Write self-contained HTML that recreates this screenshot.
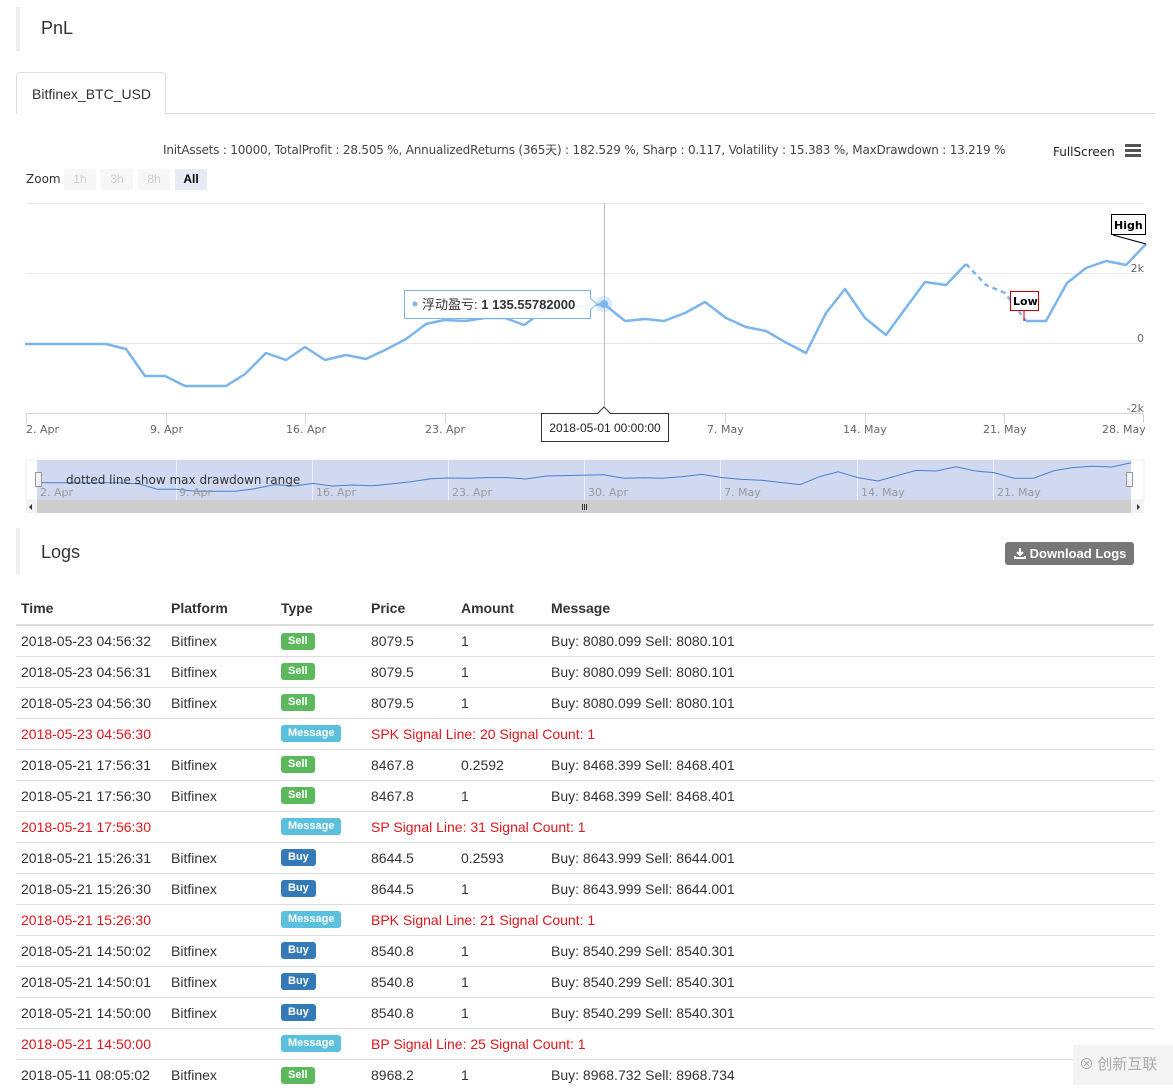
<!DOCTYPE html>
<html><head><meta charset="utf-8">
<style>
*{box-sizing:border-box;margin:0;padding:0}
body{width:1173px;height:1085px;overflow:hidden;background:#fff;font-family:"Liberation Sans","Noto Sans CJK SC",sans-serif;color:#333;position:relative;font-size:14px}
.abs{position:absolute}
.hdr{position:absolute;left:16px;border-left:4px solid #eee;}
table{position:absolute;left:16px;top:595px;width:1138px;border-collapse:collapse;font-size:14px}
th{text-align:left;font-weight:bold;height:30px;border-bottom:2px solid #ddd;padding-left:5px;vertical-align:bottom;padding-bottom:8px}
td{height:31px;border-top:1px solid #ddd;padding-left:5px}
tr.m td{color:#e0161c}
.b{display:inline-block;color:#fff;font-size:11px;font-weight:bold;padding:2px 7px;border-radius:3px;line-height:13px;vertical-align:middle}
.s{background:#5cb85c}.u{background:#337ab7}.g{background:#5bc0de}
</style></head><body>
<div class="hdr" style="top:7px;height:44px;width:200px"><span class="abs" style="left:21px;top:11px;font-size:18px">PnL</span></div>
<div class="abs" style="left:16px;top:72px;width:150px;height:42px;border:1px solid #ddd;border-bottom:none;border-radius:4px 4px 0 0;background:#fff;z-index:2;font-size:14px;padding:13px 0 0 15px">Bitfinex_BTC_USD</div>
<div class="abs" style="left:16px;top:113px;width:1139px;border-top:1px solid #ddd"></div>
<div class="abs" style="left:163px;top:141px;font-size:12px;color:#444;font-family:'DejaVu Sans','Noto Sans CJK SC',sans-serif;letter-spacing:-0.2px">InitAssets : 10000, TotalProfit : 28.505 %, AnnualizedReturns (365天) : 182.529 %, Sharp : 0.117, Volatility : 15.383 %, MaxDrawdown : 13.219 %</div>
<div class="abs" style="left:1053px;top:145px;font-size:12px;color:#222;font-family:'DejaVu Sans',sans-serif">FullScreen</div>
<div class="abs" style="left:1125px;top:144px;width:16px;height:3px;background:#555;box-shadow:0 5px 0 #555,0 10px 0 #555"></div>
<div class="abs" style="left:26px;top:172px;font-size:12px;color:#333;font-family:'DejaVu Sans',sans-serif">Zoom</div>
<div class="abs" style="left:64px;top:169px;width:32px;height:21px;background:#f7f7f7;color:#ccc;font-size:12px;text-align:center;line-height:20px">1h</div>
<div class="abs" style="left:101px;top:169px;width:32px;height:21px;background:#f7f7f7;color:#ccc;font-size:12px;text-align:center;line-height:20px">3h</div>
<div class="abs" style="left:138px;top:169px;width:32px;height:21px;background:#f7f7f7;color:#ccc;font-size:12px;text-align:center;line-height:20px">8h</div>
<div class="abs" style="left:175px;top:169px;width:32px;height:21px;background:#e6ebf5;color:#000;font-weight:bold;font-size:12px;text-align:center;line-height:20px">All</div>
<svg class="abs" style="left:0;top:0" width="1173" height="520" font-family="DejaVu Sans,sans-serif" font-size="11">
<g stroke="#e6e6e6"><line x1="26" x2="1144" y1="203.5" y2="203.5"/><line x1="26" x2="1144" y1="273.5" y2="273.5"/><line x1="26" x2="1144" y1="343.5" y2="343.5"/></g>
<line x1="26" x2="1144" y1="413.5" y2="413.5" stroke="#ccd6eb"/>
<g stroke="#ccd6eb"><line x1="26.5" x2="26.5" y1="413" y2="423"/><line x1="166.5" x2="166.5" y1="413" y2="423"/><line x1="305.5" x2="305.5" y1="413" y2="423"/><line x1="445.5" x2="445.5" y1="413" y2="423"/><line x1="725.5" x2="725.5" y1="413" y2="423"/><line x1="865.5" x2="865.5" y1="413" y2="423"/><line x1="1004.5" x2="1004.5" y1="413" y2="423"/><line x1="1143.5" x2="1143.5" y1="413" y2="423"/></g>
<line x1="604.5" x2="604.5" y1="203" y2="413" stroke="#bbb"/>
<g fill="#666"><text x="26" y="433">2. Apr</text><text x="150" y="433">9. Apr</text><text x="286" y="433">16. Apr</text><text x="425" y="433">23. Apr</text><text x="707" y="433">7. May</text><text x="843" y="433">14. May</text><text x="983" y="433">21. May</text><text x="1102" y="433">28. May</text>
<text x="1144" y="272" text-anchor="end">2k</text><text x="1144" y="342" text-anchor="end">0</text><text x="1144" y="412" text-anchor="end">-2k</text></g>
<g fill="none" stroke="#7cb5ec" stroke-width="2.5" stroke-linejoin="round">
<polyline points="25,344 106,344 126,349 145,376 165,376 185,386 226,386 245,374 266,353 286,360 305,347 325,360 346,355 366,359 387,349 406,339 426,324 444,320 465,321 485,318 505,318 524,325 545,310 604,304 625,321 645,319 664,321 685,313 705,302 726,318 746,327 766,331 785,342 806,353 826,313 845,289 865,318 886,335 905,309 925,282 946,285 966,264"/>
<polyline points="966,264 986,285 1005,293 1026,321" stroke-dasharray="5,4"/>
<polyline points="1026,321 1046,321 1067,283 1086,268 1106,261 1126,265 1146,244"/>
</g>
<circle cx="604" cy="304" r="8" fill="#7cb5ec" opacity=".3"/><circle cx="604" cy="304" r="4" fill="#7cb5ec"/>
<rect x="404.5" y="290.5" width="186" height="28" fill="#fff" fill-opacity=".9" stroke="#7cb5ec"/>
<path d="M590 298 L597 304 L590 310" fill="#fff" stroke="#7cb5ec"/>
<circle cx="415" cy="304" r="2.5" fill="#7cb5ec"/>
<text x="422" y="309" font-size="13" fill="#333" font-family="Liberation Sans,Noto Sans CJK SC,sans-serif">浮动盈亏: <tspan font-weight="bold">1 135.55782000</tspan></text>
<rect x="541.5" y="413.5" width="127" height="28" fill="#fff" stroke="#333"/>
<path d="M597 414 L604 407 L611 414" fill="#fff" stroke="#333"/>
<text x="605" y="432" font-size="12" fill="#222" text-anchor="middle" font-family="Liberation Sans,sans-serif">2018-05-01 00:00:00</text>
<rect x="1010.5" y="291.5" width="28" height="19" fill="#fff" stroke="#c00"/><line x1="1024" x2="1024" y1="311" y2="321" stroke="#c00"/>
<text x="1013" y="305" font-size="11" font-weight="bold" fill="#000">Low</text>
<rect x="1111.5" y="214.5" width="34" height="20" fill="#fff" stroke="#000"/><line x1="1113" x2="1146" y1="235" y2="244" stroke="#000"/>
<text x="1114" y="229" font-size="11" font-weight="bold" fill="#000">High</text>
<rect x="26" y="460" width="1118" height="40" fill="#fff" stroke="#eee"/>
<rect x="37" y="460" width="1094" height="40" fill="#ccd5ee" opacity=".9"/>
<g stroke="#fff" stroke-opacity=".6"><line x1="176.5" x2="176.5" y1="460" y2="500"/><line x1="312.5" x2="312.5" y1="460" y2="500"/><line x1="448.5" x2="448.5" y1="460" y2="500"/><line x1="584.5" x2="584.5" y1="460" y2="500"/><line x1="720.5" x2="720.5" y1="460" y2="500"/><line x1="857.5" x2="857.5" y1="460" y2="500"/><line x1="993.5" x2="993.5" y1="460" y2="500"/></g>
<g transform="translate(16,414) scale(0.973,0.2)"><polyline points="25,344 106,344 126,349 145,376 165,376 185,386 226,386 245,374 266,353 286,360 305,347 325,360 346,355 366,359 387,349 406,339 426,324 444,320 465,321 485,318 505,318 524,325 545,310 604,304 625,321 645,319 664,321 685,313 705,302 726,318 746,327 766,331 785,342 806,353 826,313 845,289 865,318 886,335 905,309 925,282 946,285 966,264 986,285 1005,293 1026,321 1046,321 1067,283 1086,268 1106,261 1126,265 1146,244" fill="none" stroke="#4a7fd0" stroke-width="1" vector-effect="non-scaling-stroke"/></g>
<g fill="#999" font-size="11"><text x="40" y="496">2. Apr</text><text x="179" y="496">9. Apr</text><text x="316" y="496">16. Apr</text><text x="452" y="496">23. Apr</text><text x="588" y="496">30. Apr</text><text x="724" y="496">7. May</text><text x="861" y="496">14. May</text><text x="997" y="496">21. May</text></g>
<text x="66" y="484" font-size="12" fill="#333">dotted line show max drawdown range</text>
<rect x="35.5" y="472.5" width="6" height="14" fill="#f2f2f2" stroke="#999"/><rect x="1126.5" y="472.5" width="6" height="14" fill="#f2f2f2" stroke="#999"/>
<rect x="26" y="500" width="1118" height="13" fill="#f2f2f2"/>
<rect x="37" y="500" width="1094" height="13" fill="#cdcdcd"/>
<path d="M32 504 L32 510 L29 507Z M1137 504 L1137 510 L1140 507Z" fill="#333"/>
<g stroke="#333"><line x1="582.5" x2="582.5" y1="504" y2="510"/><line x1="584.5" x2="584.5" y1="504" y2="510"/><line x1="586.5" x2="586.5" y1="504" y2="510"/></g>
</svg>
<div class="hdr" style="top:528px;height:46px;width:200px"><span class="abs" style="left:21px;top:14px;font-size:18px">Logs</span></div>
<div class="abs" style="left:1005px;top:542px;width:129px;height:23px;background:#777;border-radius:3px;color:#fff;font-weight:bold;font-size:13px;line-height:23px;padding-left:9px">
<svg width="12" height="12" style="vertical-align:-1px" viewBox="0 0 12 12"><path d="M6 1 V8 M3 5 L6 8 L9 5 M1 9 V11 H11 V9" stroke="#fff" stroke-width="2" fill="none"/></svg> Download Logs</div>
<table>
<tr><th style="width:150px">Time</th><th style="width:110px">Platform</th><th style="width:90px">Type</th><th style="width:90px">Price</th><th style="width:90px">Amount</th><th>Message</th></tr>
<tr><td>2018-05-23 04:56:32</td><td>Bitfinex</td><td><span class="b s">Sell</span></td><td>8079.5</td><td>1</td><td>Buy: 8080.099 Sell: 8080.101</td></tr>
<tr><td>2018-05-23 04:56:31</td><td>Bitfinex</td><td><span class="b s">Sell</span></td><td>8079.5</td><td>1</td><td>Buy: 8080.099 Sell: 8080.101</td></tr>
<tr><td>2018-05-23 04:56:30</td><td>Bitfinex</td><td><span class="b s">Sell</span></td><td>8079.5</td><td>1</td><td>Buy: 8080.099 Sell: 8080.101</td></tr>
<tr class="m"><td>2018-05-23 04:56:30</td><td></td><td><span class="b g">Message</span></td><td colspan="3">SPK Signal Line: 20 Signal Count: 1</td></tr>
<tr><td>2018-05-21 17:56:31</td><td>Bitfinex</td><td><span class="b s">Sell</span></td><td>8467.8</td><td>0.2592</td><td>Buy: 8468.399 Sell: 8468.401</td></tr>
<tr><td>2018-05-21 17:56:30</td><td>Bitfinex</td><td><span class="b s">Sell</span></td><td>8467.8</td><td>1</td><td>Buy: 8468.399 Sell: 8468.401</td></tr>
<tr class="m"><td>2018-05-21 17:56:30</td><td></td><td><span class="b g">Message</span></td><td colspan="3">SP Signal Line: 31 Signal Count: 1</td></tr>
<tr><td>2018-05-21 15:26:31</td><td>Bitfinex</td><td><span class="b u">Buy</span></td><td>8644.5</td><td>0.2593</td><td>Buy: 8643.999 Sell: 8644.001</td></tr>
<tr><td>2018-05-21 15:26:30</td><td>Bitfinex</td><td><span class="b u">Buy</span></td><td>8644.5</td><td>1</td><td>Buy: 8643.999 Sell: 8644.001</td></tr>
<tr class="m"><td>2018-05-21 15:26:30</td><td></td><td><span class="b g">Message</span></td><td colspan="3">BPK Signal Line: 21 Signal Count: 1</td></tr>
<tr><td>2018-05-21 14:50:02</td><td>Bitfinex</td><td><span class="b u">Buy</span></td><td>8540.8</td><td>1</td><td>Buy: 8540.299 Sell: 8540.301</td></tr>
<tr><td>2018-05-21 14:50:01</td><td>Bitfinex</td><td><span class="b u">Buy</span></td><td>8540.8</td><td>1</td><td>Buy: 8540.299 Sell: 8540.301</td></tr>
<tr><td>2018-05-21 14:50:00</td><td>Bitfinex</td><td><span class="b u">Buy</span></td><td>8540.8</td><td>1</td><td>Buy: 8540.299 Sell: 8540.301</td></tr>
<tr class="m"><td>2018-05-21 14:50:00</td><td></td><td><span class="b g">Message</span></td><td colspan="3">BP Signal Line: 25 Signal Count: 1</td></tr>
<tr><td>2018-05-11 08:05:02</td><td>Bitfinex</td><td><span class="b s">Sell</span></td><td>8968.2</td><td>1</td><td>Buy: 8968.732 Sell: 8968.734</td></tr>
</table>
<div class="abs" style="left:1073px;top:1045px;width:100px;height:40px;background:#f4f4f4;color:#aaa;font-size:15px;line-height:38px;padding-left:6px;font-family:'Noto Sans CJK SC',sans-serif">⊗ 创新互联</div>
</body></html>
